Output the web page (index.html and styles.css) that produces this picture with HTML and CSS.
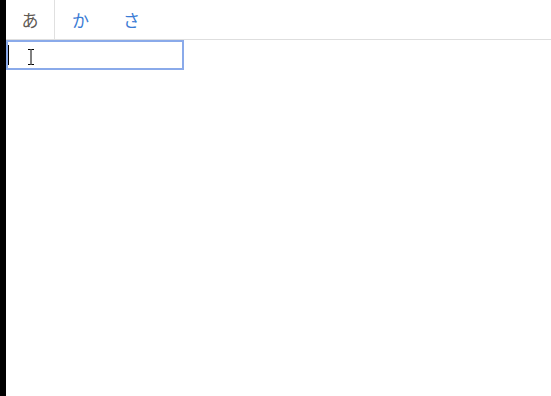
FILE: index.html
```html
<!DOCTYPE html>
<html lang="ja">
<head>
    <meta charset="UTF-8">
    <meta name="viewport" content="width=device-width, initial-scale=1.0">
    <title>Kana</title>
    <link rel="stylesheet" href="styles.css">
</head>
<body>

<div class="edge"></div>

<div class="main">
    <!-- Tabs -->
    <div class="tabs">
        <div class="tab active">あ</div>
        <div class="tab">か</div>
        <div class="tab">さ</div>
    </div>

    <!-- Input -->
    <div class="field">
        <span class="caret"></span>
        <svg class="ibeam" width="8" height="16" viewBox="0 0 8 16">
            <path d="M1 0.5h2.5l0.5 0.5l0.5-0.5h2.5M4 1v14M1 15.5h2.5l0.5-0.5l0.5 0.5h2.5" fill="none" stroke="#000" stroke-width="1"/>
        </svg>
    </div>
</div>

</body>
</html>
```

FILE: styles.css
```css
* {
    margin: 0;
    padding: 0;
    box-sizing: border-box;
}

body, html {
    height: 100%;
    width: 100%;
    background-color: #fff;
    font-family: "Noto Sans CJK JP", "Noto Sans", sans-serif;
}

body {
    display: flex;
}

.edge {
    width: 6px;
    background-color: #000;
}

.main {
    flex: 1;
}

.tabs {
    display: flex;
    height: 40px;
    border-bottom: 1px solid #dedede;
}

.tab {
    width: 51px;
    display: flex;
    justify-content: center;
    align-items: center;
    font-size: 17px;
    color: #3a7bd5;
    padding-bottom: 1px;
}

.tab.active {
    width: 49px;
    color: #5f5a55;
    border-right: 1px solid #e0e0e0;
}

.field {
    position: relative;
    width: 178px;
    height: 30px;
    border: 2px solid #8aaaea;
}

.caret {
    position: absolute;
    left: 0;
    top: 3px;
    width: 1px;
    height: 20px;
    background-color: #000;
}

.ibeam {
    position: absolute;
    left: 19px;
    top: 7px;
}
```
